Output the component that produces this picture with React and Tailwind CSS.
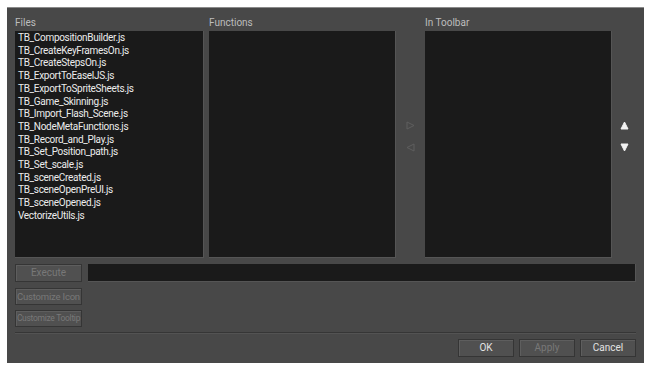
import React from "react";

const files = [
  "TB_CompositionBuilder.js",
  "TB_CreateKeyFramesOn.js",
  "TB_CreateStepsOn.js",
  "TB_ExportToEaselJS.js",
  "TB_ExportToSpriteSheets.js",
  "TB_Game_Skinning.js",
  "TB_Import_Flash_Scene.js",
  "TB_NodeMetaFunctions.js",
  "TB_Record_and_Play.js",
  "TB_Set_Position_path.js",
  "TB_Set_scale.js",
  "TB_sceneCreated.js",
  "TB_sceneOpenPreUI.js",
  "TB_sceneOpened.js",
  "VectorizeUtils.js",
];

const Tri = ({ dir, color }) => {
  const pts = {
    right: "1,1 8,4.5 1,8",
    left: "8,1 1,4.5 8,8",
    up: "4.5,1 8,8 1,8",
    down: "1,1 8,1 4.5,8",
  }[dir];
  const hollow = dir === "right" || dir === "left";
  return (
    <svg width="9" height="9" viewBox="0 0 9 9">
      <polygon points={pts} fill={hollow ? "none" : color} stroke={color} strokeWidth="1" />
    </svg>
  );
};

const Btn = ({ children, disabled, className = "" }) => (
  <div
    className={`flex items-center justify-center whitespace-nowrap bg-[#505050] border border-[#353535] shadow-[inset_1px_1px_0_#5e5e5e] leading-none ${
      disabled ? "text-[#787878]" : "text-[#e2e2e2]"
    } ${className}`}
  >
    {children}
  </div>
);

export default function App() {
  return (
    <div
      className="w-[652px] h-[371px] bg-white p-[7px] pr-[8px] pb-[8px]"
      style={{ fontFamily: 'Roboto, "Noto Sans", sans-serif' }}
    >
      <div className="h-full bg-[#484848] border-t border-[#8a8a8a] pl-[8px] pr-[8px] pt-[7px] flex flex-col">
        {/* lists */}
        <div className="flex">
          <div className="w-[189px] flex flex-col">
            <div className="h-[16px] text-[10px] leading-[16px] text-[#bdbdbd]">Files</div>
            <div className="h-[227px] bg-[#1a1a1a] border-r border-b border-[#555] pt-[1px] pl-[3px]">
              {files.map((f) => (
                <div key={f} className="text-[10px] leading-[12.7px] tracking-[-0.3px] text-[#ececec] whitespace-nowrap">
                  {f}
                </div>
              ))}
            </div>
          </div>
          <div className="w-[187px] ml-[5px] flex flex-col">
            <div className="h-[16px] text-[10px] leading-[16px] text-[#bdbdbd]">Functions</div>
            <div className="h-[227px] bg-[#1a1a1a] border-r border-b border-[#555]" />
          </div>
          <div className="w-[29px] pt-[106px] flex flex-col items-center gap-[13px]">
            <Tri dir="right" color="#5e5e5e" />
            <Tri dir="left" color="#5e5e5e" />
          </div>
          <div className="w-[187px] flex flex-col">
            <div className="h-[16px] text-[10px] leading-[16px] text-[#bdbdbd]">In Toolbar</div>
            <div className="h-[227px] bg-[#1a1a1a] border-r border-b border-[#555]" />
          </div>
          <div className="flex-1 pt-[106px] flex flex-col items-center gap-[13px]">
            <Tri dir="up" color="#f2f2f2" />
            <Tri dir="down" color="#f2f2f2" />
          </div>
        </div>

        {/* execute row */}
        <div className="flex mt-[6px] gap-[6px]">
          <Btn disabled className="w-[67px] h-[18px] text-[10px]">Execute</Btn>
          <div className="flex-1 h-[18px] bg-[#1a1a1a] border-r border-b border-[#555]" />
        </div>
        <Btn disabled className="w-[67px] h-[17px] mt-[6px] text-[9.5px] tracking-[-0.2px]">Customize Icon</Btn>
        <Btn disabled className="w-[67px] h-[17px] mt-[5px] text-[8.5px] tracking-[-0.3px]">Customize Tooltip</Btn>

        <div className="mt-[5px] border-t border-[#363636] border-b border-b-[#535353]" />

        <div className="flex justify-end gap-[5px] mt-[5px]">
          <Btn className="w-[56px] h-[18px] text-[10px]">OK</Btn>
          <Btn disabled className="w-[56px] h-[18px] text-[10px]">Apply</Btn>
          <Btn className="w-[56px] h-[18px] text-[10px]">Cancel</Btn>
        </div>
      </div>
    </div>
  );
}
